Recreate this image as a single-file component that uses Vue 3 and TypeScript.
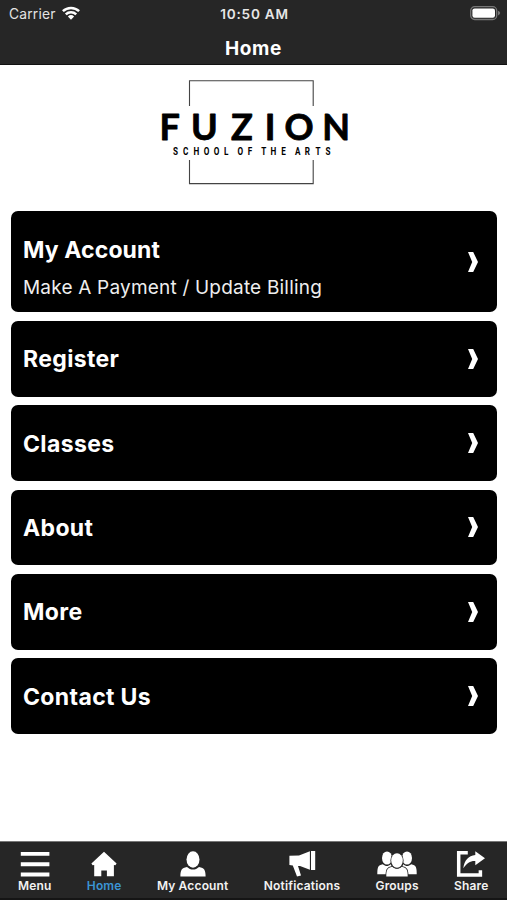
<script setup lang="ts">
interface MenuItem {
  title: string
  subtitle?: string
}

interface Tab {
  id: string
  label: string
  active?: boolean
}

const items: MenuItem[] = [
  { title: 'My Account', subtitle: 'Make A Payment / Update Billing' },
  { title: 'Register' },
  { title: 'Classes' },
  { title: 'About' },
  { title: 'More' },
  { title: 'Contact Us' },
]

const tabs: Tab[] = [
  { id: 'menu', label: 'Menu' },
  { id: 'home', label: 'Home', active: true },
  { id: 'account', label: 'My Account' },
  { id: 'notifications', label: 'Notifications' },
  { id: 'groups', label: 'Groups' },
  { id: 'share', label: 'Share' },
]
</script>

<template>
  <div class="screen">
    <header class="top">
      <div class="status">
        <div class="carrier">
          <span>Carrier</span>
          <svg width="20" height="16" viewBox="0 0 20 16">
            <path d="M1.9 6.2a11.6 11.6 0 0 1 16.2 0M4.8 9.3a7.4 7.4 0 0 1 10.4 0" fill="none" stroke="#fff" stroke-width="2.5" />
            <path d="M10 14.7 6.9 11.5a4.5 4.5 0 0 1 6.2 0z" fill="#fff" />
          </svg>
        </div>
        <time class="clock">10:50 AM</time>
        <svg class="battery" width="32" height="16" viewBox="0 0 32 16">
          <rect x="1.7" y="1.7" width="26" height="12.8" rx="4" fill="none" stroke="#777" stroke-width="1.3" />
          <rect x="3.4" y="3.4" width="22.6" height="9.4" rx="2.2" fill="#fff" />
          <path d="M29 5.8q2.2.8 2.2 2.3T29 10.4z" fill="#777" />
        </svg>
      </div>
      <h1 class="title">Home</h1>
    </header>

    <main class="content">
      <svg class="logo" width="210" height="120" viewBox="0 0 210 120">
        <path d="M39.5 36V10.7h123.7V36M39.5 90v23.6h123.7V90" fill="none" stroke="#444" stroke-width="1.1" />
        <text class="brand" y="69.6" x="19.8 54.3 92 120 149 186">FUZION</text>
        <g transform="scale(.72 1)">
          <text class="tagline" y="85.5" x="35.6 49.5 64.4 78.7 92.6 106 115 125.5 138.9 148 157.9 171.3 185.6 195 205.1 218.5 233.3 247.2">SCHOOL OF THE ARTS</text>
        </g>
      </svg>

      <nav class="list">
        <a v-for="item in items" :key="item.title" class="card" :class="{ tall: item.subtitle }">
          <div class="copy">
            <h2>{{ item.title }}</h2>
            <p v-if="item.subtitle">{{ item.subtitle }}</p>
          </div>
          <svg class="chevron" width="10" height="20" viewBox="0 0 10 20">
            <path d="M0 0h5.2L10 10 5.2 20H0l4.2-10z" fill="#fff" />
          </svg>
        </a>
      </nav>
    </main>

    <footer class="tabs">
      <a v-for="tab in tabs" :key="tab.id" class="tab" :class="{ active: tab.active }">
        <svg v-if="tab.id === 'menu'" width="30" height="28" viewBox="0 0 30 28">
          <path d="M.8 3.9h28.6M.8 14.2h28.6M.8 24.5h28.6" stroke="#fff" stroke-width="3.9" />
        </svg>
        <svg v-else-if="tab.id === 'home'" width="26" height="28" viewBox="0 0 26 28">
          <path d="M13 1.8 25.6 13.5l-1.2 1.8-1.5-.4v11.4h-7v-5.7h-5.6v5.7H3.2V14.9l-1.6.4-1.2-1.8z" fill="#fff" />
        </svg>
        <svg v-else-if="tab.id === 'account'" width="26" height="28" viewBox="0 0 26 28">
          <ellipse cx="13" cy="9.5" rx="6.5" ry="8.2" fill="#fff" />
          <path d="M.4 26.5c0-6 1-8.8 6.6-9.6 3.5 3.4 8.5 3.4 12 0 5.6.8 6.6 3.6 6.6 9.6z" fill="#fff" />
        </svg>
        <svg v-else-if="tab.id === 'notifications'" width="27" height="28" viewBox="0 0 27 28">
          <path d="M.4 5.8 10 5.4 20.9 1.2v18.5L11 15.9H9l3 9.5-4 1-4.2-10.8-3.4-.6zM22 1h4.2v19H22z" fill="#fff" />
        </svg>
        <svg v-else-if="tab.id === 'groups'" width="40" height="28" viewBox="0 0 40 28">
          <g fill="#fff">
            <ellipse cx="10" cy="8" rx="5" ry="6.6" />
            <ellipse cx="30" cy="8" rx="5" ry="6.6" />
            <path d="M.3 24.3c0-6.5.5-9.2 5.5-10 3 2.3 5 2.5 8 0l4 10zM39.7 24.3c0-6.5-.5-9.2-5.5-10-3 2.3-5 2.5-8 0l-4 10z" />
          </g>
          <g fill="#fff" stroke="#262626" stroke-width="1.6" paint-order="stroke">
            <path d="M9.3 26.4c0-6.5 1-8.8 6-9.6 3 2.7 6.4 2.7 9.4 0 5 .8 6 3.1 6 9.6z" />
            <ellipse cx="20" cy="10.5" rx="5.8" ry="7.3" />
          </g>
        </svg>
        <svg v-else width="30" height="28" viewBox="0 0 30 28">
          <path d="M11.8 2.8H2.7v22.3h21.7v-4.9" fill="none" stroke="#fff" stroke-width="3.5" />
          <path d="M19.3 1.2 29 8.2l-9.7 7v-4.1c-5.4-.2-8.1 2.4-12 7.1C8.3 10.3 12.4 5.8 19.3 5z" fill="#fff" />
        </svg>
        <span>{{ tab.label }}</span>
      </a>
    </footer>
  </div>
</template>

<style>
body {
  background: #fff;
}
</style>

<style scoped>
.screen {
  display: flex;
  flex-direction: column;
  width: 507px;
  height: 900px;
  overflow: hidden;
  font-family: Inter, "Liberation Sans", sans-serif;
  background: #fff;
}

.top {
  box-sizing: border-box;
  height: 64.5px;
  background: #262626;
  border-bottom: 1px solid #111;
  color: #fff;
}

.status {
  display: grid;
  grid-template-columns: 1fr auto 1fr;
  align-items: center;
  height: 28px;
  padding: 0 7px 0 9px;
}

.carrier {
  display: flex;
  align-items: center;
  gap: 5px;
  font-size: 13.8px;
  letter-spacing: 0.2px;
  color: #e3e3e3;
}

.carrier svg {
  margin-top: -3px;
}

.clock {
  font-size: 13.6px;
  font-weight: 600;
  letter-spacing: 0.75px;
  color: #e6e6e6;
}

.battery {
  justify-self: end;
  margin: -3px -1px 0 0;
}

.title {
  margin: 0;
  padding-top: 9px;
  font-size: 19px;
  font-weight: 700;
  line-height: 23px;
  letter-spacing: 0.6px;
  text-align: center;
}

.content {
  display: flex;
  flex: 1;
  flex-direction: column;
}

.logo {
  display: block;
  margin: 5.5px 0 0 150px;
}

.brand {
  font-family: Lato, sans-serif;
  font-size: 36px;
  font-weight: 700;
  text-anchor: middle;
  stroke: #000;
  stroke-width: 0.8px;
  stroke-linejoin: round;
}

.tagline {
  font-family: Roboto, sans-serif;
  font-size: 11.3px;
  font-weight: 700;
  text-anchor: middle;
}

.list {
  display: flex;
  flex-direction: column;
  gap: 8.6px;
  padding: 20.8px 10.4px 0 11px;
}

.card {
  box-sizing: border-box;
  display: flex;
  align-items: center;
  justify-content: space-between;
  height: 75.7px;
  padding: 0 19px 0 12px;
  border-radius: 7px;
  background: #000;
  color: #fff;
}

.card.tall {
  height: 101.7px;
}

h2 {
  margin: 0;
  padding-top: 1px;
  font-size: 23px;
  font-weight: 700;
  line-height: 30px;
  letter-spacing: 0.36px;
}

.tall h2 {
  padding-top: 0;
  letter-spacing: 0.12px;
}

p {
  margin: 10px 0 -13px;
  font-size: 19px;
  line-height: 26px;
  letter-spacing: 0.2px;
  color: #eee;
}

.tabs {
  box-sizing: border-box;
  display: flex;
  gap: 35.3px;
  height: 59px;
  padding: 8px 0 0 18px;
  background: #262626;
  border-top: 1px solid #777;
  border-bottom: 2px solid #151515;
}

.tab {
  display: flex;
  flex-direction: column;
  align-items: center;
  color: #f2f2f2;
  font-size: 12px;
  font-weight: 600;
  line-height: 15px;
  letter-spacing: 0.16px;
  white-space: nowrap;
}

.tab.active {
  color: #3b94d4;
}
</style>
